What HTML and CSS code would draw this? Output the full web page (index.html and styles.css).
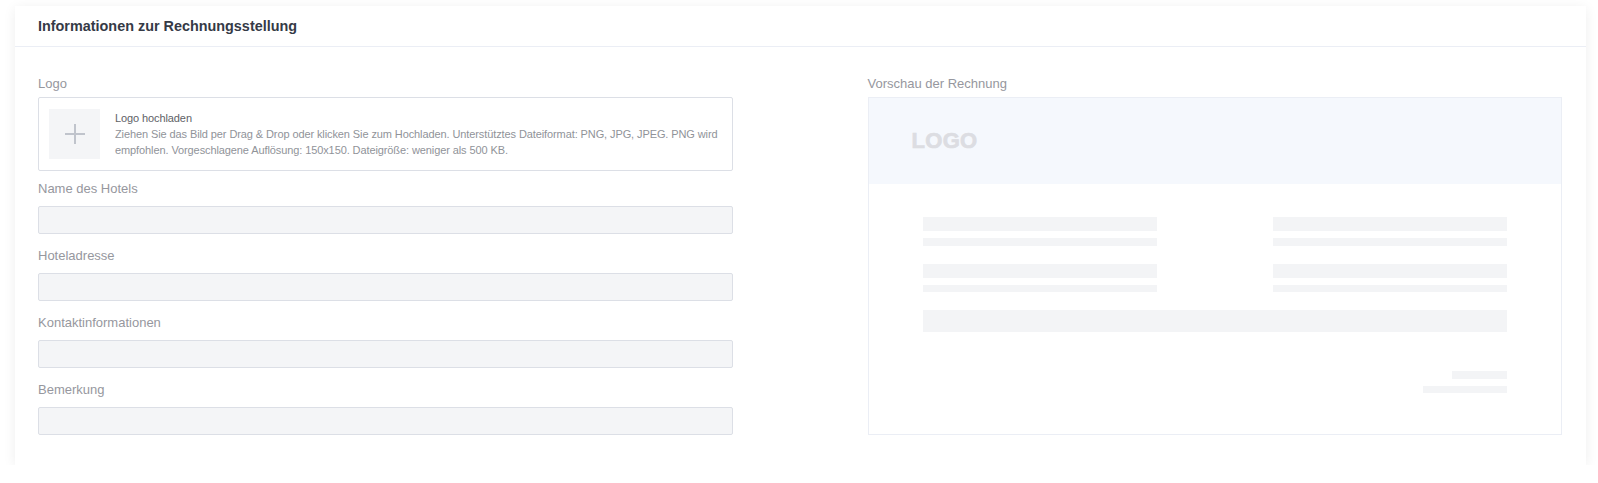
FILE: index.html
```html
<!DOCTYPE html>
<html lang="de">
<head>
    <meta charset="UTF-8">
    <meta name="viewport" content="width=device-width, initial-scale=1.0">
    <title>Informationen zur Rechnungsstellung</title>
    <link rel="stylesheet" href="styles.css">
</head>
<body>
    <div class="card">
        <div class="card-header">
            <h2>Informationen zur Rechnungsstellung</h2>
        </div>
        <div class="card-body">
            <div class="form-col">
                <div class="field field-logo">
                    <label>Logo</label>
                    <div class="upload">
                        <div class="upload-square">
                            <svg width="22" height="22" viewBox="0 0 22 22">
                                <path d="M11 1v20M1 11h20" stroke="#c0c4cc" stroke-width="2" fill="none"/>
                            </svg>
                        </div>
                        <div class="upload-text">
                            <div class="upload-title">Logo hochladen</div>
                            <div class="upload-desc">Ziehen Sie das Bild per Drag &amp; Drop oder klicken Sie zum Hochladen. Unterstütztes Dateiformat: PNG, JPG, JPEG. PNG wird empfohlen. Vorgeschlagene Auflösung: 150x150. Dateigröße: weniger als 500 KB.</div>
                        </div>
                    </div>
                </div>
                <div class="field">
                    <label for="hotelName">Name des Hotels</label>
                    <input type="text" id="hotelName">
                </div>
                <div class="field">
                    <label for="hotelAddress">Hoteladresse</label>
                    <input type="text" id="hotelAddress">
                </div>
                <div class="field">
                    <label for="contact">Kontaktinformationen</label>
                    <input type="text" id="contact">
                </div>
                <div class="field">
                    <label for="remark">Bemerkung</label>
                    <input type="text" id="remark">
                </div>
            </div>
            <div class="preview-col">
                <label>Vorschau der Rechnung</label>
                <div class="preview">
                    <div class="preview-head">
                        <span class="preview-logo">LOGO</span>
                    </div>
                    <div class="preview-body">
                        <div class="sk-row">
                            <div class="sk-col">
                                <div class="sk sk-lg"></div>
                                <div class="sk sk-sm"></div>
                            </div>
                            <div class="sk-col">
                                <div class="sk sk-lg"></div>
                                <div class="sk sk-sm"></div>
                            </div>
                        </div>
                        <div class="sk-row">
                            <div class="sk-col">
                                <div class="sk sk-lg"></div>
                                <div class="sk sk-xs"></div>
                            </div>
                            <div class="sk-col">
                                <div class="sk sk-lg"></div>
                                <div class="sk sk-xs"></div>
                            </div>
                        </div>
                        <div class="sk sk-wide"></div>
                        <div class="sk-total">
                            <div class="sk sk-sm sk-short"></div>
                            <div class="sk sk-xs sk-mid"></div>
                        </div>
                    </div>
                </div>
            </div>
        </div>
    </div>
</body>
</html>
```

FILE: styles.css
```css
body {
    margin: 0;
    background: #fff;
    font-family: "Liberation Sans", Arial, sans-serif;
}
.card {
    margin: 6px 12px 0 15px;
    background: #fff;
    box-shadow: 0 2px 12px rgba(0, 0, 0, 0.07);
}
.card-header {
    height: 40px;
    padding: 0 23px;
    border-bottom: 1px solid #ebeef5;
}
.card-header h2 {
    margin: 0;
    font-size: 14.4px;
    line-height: 40px;
    font-weight: bold;
    color: #353a46;
}
.card-body {
    display: grid;
    grid-template-columns: 1fr 1fr;
    column-gap: 135px;
    padding: 27px 24px 30px 23px;
}
label {
    display: block;
    font-size: 13px;
    line-height: 20px;
    color: #96979e;
    margin-bottom: 7px;
}
.field {
    margin-bottom: 12px;
}
.field:last-child {
    margin-bottom: 0;
}
.field-logo {
    margin-bottom: 8px;
}
.field-logo label {
    margin-bottom: 3px;
}
input[type="text"] {
    display: block;
    box-sizing: border-box;
    width: 100%;
    height: 28px;
    margin: 0;
    background: #f4f5f7;
    border: 1px solid #dcdfe6;
    border-radius: 2px;
    outline: none;
}
.upload {
    display: flex;
    align-items: center;
    padding: 11px 4px 11px 10px;
    border: 1px solid #dcdfe6;
    border-radius: 2px;
}
.upload-square {
    flex: none;
    width: 51px;
    height: 50px;
    background: #f4f5f7;
    display: flex;
    align-items: center;
    justify-content: center;
    margin-right: 15px;
}
.upload-text {
    font-size: 11px;
    line-height: 16px;
    letter-spacing: -0.1px;
}
.upload-title {
    color: #606266;
}
.upload-desc {
    color: #909399;
}
.preview-col {
    display: flex;
    flex-direction: column;
}
.preview-col label {
    margin-bottom: 3px;
}
.preview {
    flex: 1;
    border: 1px solid #ebeef5;
}
.preview-head {
    height: 86px;
    display: flex;
    align-items: center;
    padding-left: 43px;
    background: #f5f8fd;
}
.preview-logo {
    font-size: 22px;
    font-weight: 900;
    color: #dcdde2;
    -webkit-text-stroke: 0.7px #dcdde2;
    letter-spacing: 0.3px;
}
.preview-body {
    padding: 33px 54px 0 54px;
}
.sk {
    background: #f3f4f6;
}
.sk-lg {
    height: 14px;
}
.sk-sm {
    height: 8px;
    margin-top: 7px;
}
.sk-xs {
    height: 7px;
    margin-top: 7px;
}
.sk-row {
    display: flex;
    justify-content: space-between;
    margin-bottom: 18px;
}
.sk-col {
    width: 234px;
}
.sk-wide {
    height: 22px;
}
.sk-total {
    display: flex;
    flex-direction: column;
    align-items: flex-end;
    margin-top: 39px;
}
.sk-short {
    width: 55px;
    margin-top: 0;
}
.sk-mid {
    width: 84px;
}
```
